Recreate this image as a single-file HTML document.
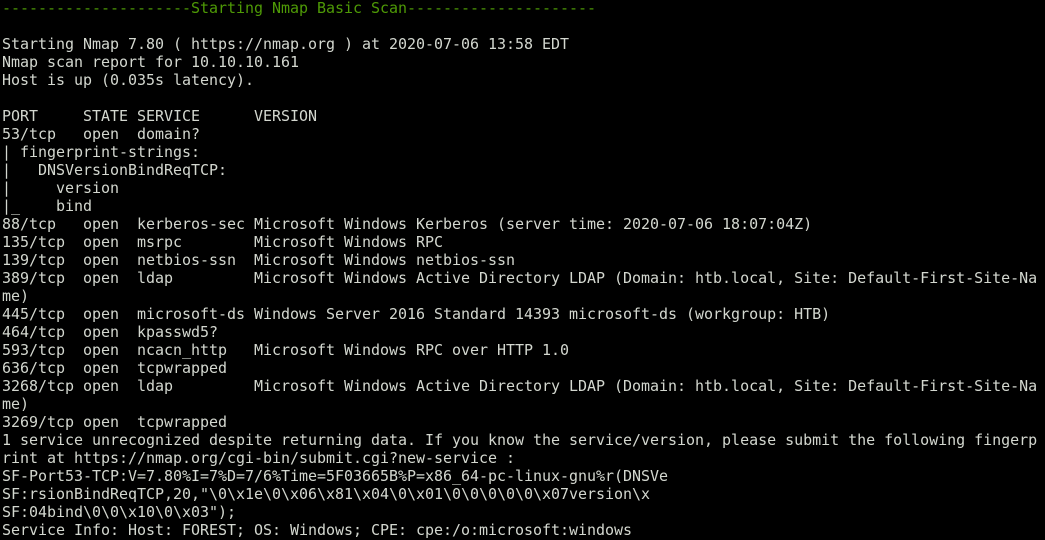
<!DOCTYPE html>
<html><head><style>
html,body{margin:0;padding:0;background:#000;width:1045px;height:540px;overflow:hidden}
pre{margin:-1px 0 0 0;padding:0 0 0 2px;font-family:"DejaVu Sans Mono","Liberation Mono",monospace;font-size:15px;letter-spacing:-0.03px;line-height:18px;color:#d3d7cf;white-space:pre}
.g{color:#4e9a06}
</style></head><body><pre><span class="g">---------------------Starting Nmap Basic Scan---------------------</span>

Starting Nmap 7.80 ( https://nmap.org ) at 2020-07-06 13:58 EDT
Nmap scan report for 10.10.10.161
Host is up (0.035s latency).

PORT     STATE SERVICE      VERSION
53/tcp   open  domain?
| fingerprint-strings: 
|   DNSVersionBindReqTCP: 
|     version
|_    bind
88/tcp   open  kerberos-sec Microsoft Windows Kerberos (server time: 2020-07-06 18:07:04Z)
135/tcp  open  msrpc        Microsoft Windows RPC
139/tcp  open  netbios-ssn  Microsoft Windows netbios-ssn
389/tcp  open  ldap         Microsoft Windows Active Directory LDAP (Domain: htb.local, Site: Default-First-Site-Na
me)
445/tcp  open  microsoft-ds Windows Server 2016 Standard 14393 microsoft-ds (workgroup: HTB)
464/tcp  open  kpasswd5?
593/tcp  open  ncacn_http   Microsoft Windows RPC over HTTP 1.0
636/tcp  open  tcpwrapped
3268/tcp open  ldap         Microsoft Windows Active Directory LDAP (Domain: htb.local, Site: Default-First-Site-Na
me)
3269/tcp open  tcpwrapped
1 service unrecognized despite returning data. If you know the service/version, please submit the following fingerp
rint at https://nmap.org/cgi-bin/submit.cgi?new-service :
SF-Port53-TCP:V=7.80%I=7%D=7/6%Time=5F03665B%P=x86_64-pc-linux-gnu%r(DNSVe
SF:rsionBindReqTCP,20,"\0\x1e\0\x06\x81\x04\0\x01\0\0\0\0\0\x07version\x
SF:04bind\0\0\x10\0\x03");
Service Info: Host: FOREST; OS: Windows; CPE: cpe:/o:microsoft:windows
</pre></body></html>
